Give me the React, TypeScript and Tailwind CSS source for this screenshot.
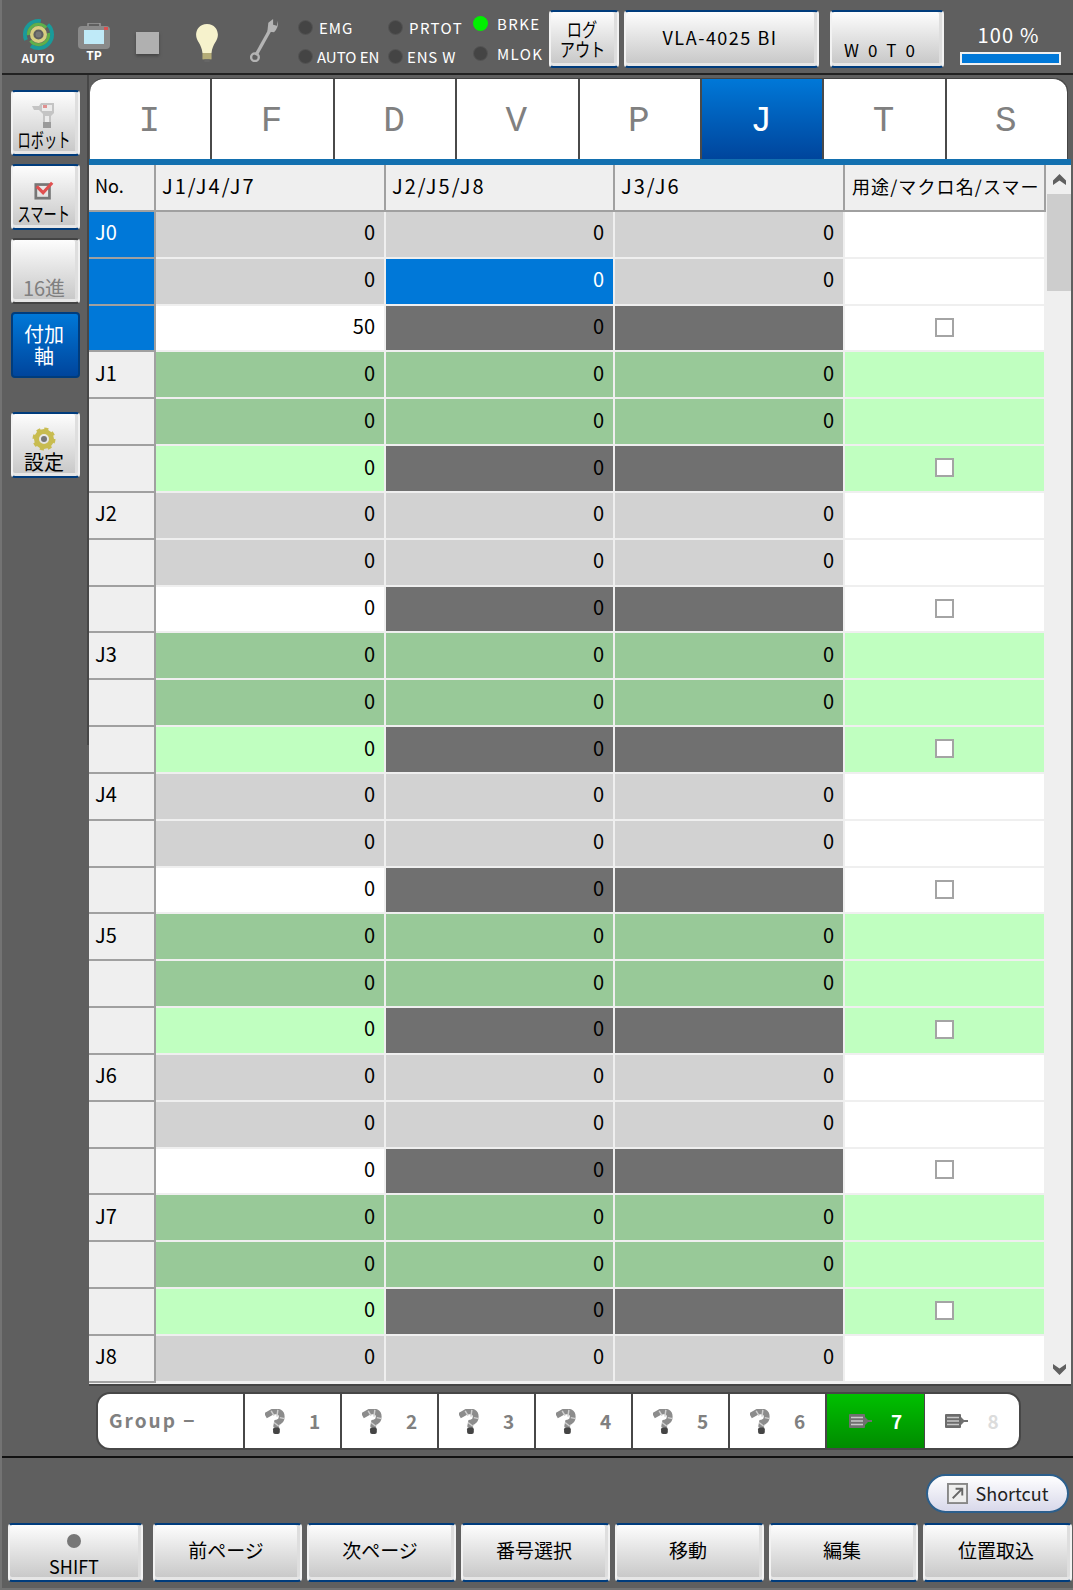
import React from "react";

const font = "font-['Noto_Sans_CJK_JP','Liberation_Sans',sans-serif]";

const tabs = ["I", "F", "D", "V", "P", "J", "T", "S"];
const sideGap = "border-r-2 border-b-2 border-[#efefef]";
const columns = "grid-cols-[67px_230px_229px_230px_201px]";

function Robot({ className = "" }: { className?: string }) {
	return (
		<svg viewBox="0 0 20 26" className={className}>
			<path d="M0 7 L7 3 Q17 1 17 8 Q17 13 12 14 L11 19" fill="none" stroke="#8c8c8c" strokeWidth="6" />
			<path d="M6 2 L9 7 M13 1 L12 8 M15 9 L20 10 M9 14 L14 18" stroke="#cfcfcf" strokeWidth="1.5" />
			<rect x="8" y="19" width="7" height="7" rx="2" fill="#444" />
		</svg>
	);
}

function SideRobot() {
	return (
		<svg viewBox="0 0 24 27" className="w-[24px] h-[27px]">
			<path d="M0 4 H7 L9 1 H22 V11 L19 14 V24 L13 26 L11 24 V12 L7 8 H2 Z" fill="#c4c4c4" />
			<path d="M10 3 H20 V9 H10 Z M13 14 H17 V22 H13 Z" fill="#ebebeb" />
			<rect x="11" y="3" width="4" height="3" fill="#e09090" />
			<path d="M11 20 H19 V26 H11 Z" fill="#9a9a9a" />
		</svg>
	);
}

function Motor({ light }: { light?: boolean }) {
	return (
		<svg viewBox="0 0 24 16" className="w-[24px] h-[16px] shrink-0">
			<rect x="0" y="1" width="16" height="14" rx="1" fill={light ? "#6c6c6c" : "#707070"} />
			<path d="M2 4.5 H14 M2 8 H14 M2 11.5 H14" stroke="#c8c8c8" strokeWidth="1.3" />
			<path d="M16 4 L19 7 H23 V9 H19 L16 12 Z" fill="#707070" />
		</svg>
	);
}

function Btn({ className = "", children, disabled }: { className?: string; children: React.ReactNode; disabled?: boolean }) {
	return (
		<div
			className={`flex flex-col items-center justify-center pr-[3px] rounded-[4px] border-x-2 border-y-2 border-x-[#f2f2f2] ${disabled ? "border-y-[#444444] text-[#808080]" : "border-y-[#003c7c] text-black"} bg-linear-to-b from-[#fdfdfd] to-[#c6c6c6] shadow-[inset_0_-3px_0_#e6e6e6,inset_-3px_0_0_#dedede] ${className}`}
		>
			{children}
		</div>
	);
}

function Led({ label, on, className = "" }: { label: string; on?: boolean; className?: string }) {
	return (
		<div className={`flex items-center gap-[4px] ${className}`}>
			<span className={`w-[15px] h-[15px] shrink-0 rounded-full ${on ? "bg-[#00f000]" : "bg-[#444444] border border-[#545454]"}`} />
			<span className="text-[15px] leading-none text-white whitespace-nowrap">{label}</span>
		</div>
	);
}

function Header() {
	return (
		<div className="h-[75px] shrink-0 border-b-2 border-[#222222] flex items-start pl-[14px]">
			<div className="w-[44px] mt-[18px] flex flex-col items-center">
				<svg viewBox="0 0 34 34" className="w-[33px] h-[33px]">
					<circle cx="17" cy="17" r="14" fill="none" stroke="#1a9a9a" strokeWidth="4" strokeDasharray="30 8" />
					<circle cx="17" cy="17" r="10.5" fill="none" stroke="#5fb04a" strokeWidth="3" strokeDasharray="26 6" />
					<circle cx="17" cy="17" r="7" fill="none" stroke="#d8cf80" strokeWidth="3.5" />
					<circle cx="17" cy="17" r="3" fill="#777" />
				</svg>
				<span className="text-[12px] leading-[14px] text-white font-bold">AUTO</span>
			</div>
			<div className="w-[40px] ml-[14px] mt-[23px] flex flex-col items-center">
				<svg viewBox="0 0 32 26" className="w-[32px] h-[26px]">
					<rect x="10" y="0" width="12" height="5" rx="1" fill="none" stroke="#999" strokeWidth="1.5" />
					<rect x="0" y="3" width="32" height="23" rx="4" fill="#8a8a8a" />
					<rect x="6" y="7" width="20" height="14" fill="#bfeaf8" />
					<rect x="26" y="4" width="4" height="3" fill="#d85050" />
				</svg>
				<span className="text-[12px] leading-[12px] text-white font-bold">TP</span>
			</div>
			<div className="w-[23px] h-[22px] ml-[22px] mt-[32px] bg-[#b0b0b0] shadow-[0_2px_3px_#444]" />
			<svg viewBox="0 0 26 44" className="w-[24px] h-[40px] ml-[36px] mt-[23px]">
				<path d="M13 1 C5 1 1 7 1 13 C1 20 7 23 8 33 H18 C19 23 25 20 25 13 C25 7 21 1 13 1 Z" fill="#f6f2cc" />
				<rect x="8" y="33" width="10" height="7" fill="#b4ac78" />
				<rect x="10" y="40" width="6" height="3" fill="#666" />
			</svg>
			<svg viewBox="0 0 30 46" className="w-[29px] h-[44px] ml-[31px] mt-[18px]">
				<path d="M6 39 L21 12" stroke="#b4b4b4" strokeWidth="3.5" />
				<path d="M18 14 L19 5 L24 1 L24 7 L28 8 L29 3 Q30 10 25 15 Z" fill="#b4b4b4" />
				<circle cx="5" cy="41" r="4" fill="none" stroke="#b4b4b4" strokeWidth="2.5" />
			</svg>
			<div className="ml-[19px] mt-[20px] w-[90px] flex flex-col gap-[14px]">
				<Led label="EMG" className="gap-[6px] tracking-[1px]" />
				<Led label="AUTO EN" />
			</div>
			<div className="mt-[20px] w-[85px] flex flex-col gap-[14px]">
				<Led label="PRTOT" className="gap-[6px] tracking-[1.4px]" />
				<Led label="ENS W" className="tracking-[0.8px]" />
			</div>
			<div className="mt-[16px] w-[84px] flex flex-col gap-[15px] tracking-[1.4px]">
				<Led label="BRKE" on className="gap-[9px]" />
				<Led label="MLOK" className="gap-[9px]" />
			</div>
			<Btn className="w-[70px] h-[58px] mt-[10px] -ml-[8px] text-[19px] leading-[20px]">
				<span className="scale-x-[0.8] whitespace-nowrap">ログ</span>
				<span className="scale-x-[0.8] whitespace-nowrap">アウト</span>
			</Btn>
			<Btn className="w-[195px] h-[58px] mt-[10px] ml-[5px] text-[18px] tracking-[1.5px] pb-[3px]">VLA-4025 BI</Btn>
			<Btn className="w-[114px] h-[58px] mt-[10px] ml-[11px] text-[17px] justify-end! pb-[4px] pr-[6px]! tracking-[9px]">W0T0</Btn>
			<div className="ml-[16px] mt-[21px] w-[101px] flex flex-col items-center">
				<span className="text-[20px] leading-[28px] text-white pr-[4px] tracking-[1.2px]">100 %</span>
				<div className="w-full h-[13px] mt-[3px] border-2 border-[#f0f0f0] bg-[#0078d8]" />
			</div>
		</div>
	);
}

function Sidebar() {
	return (
		<div className="w-[87px] h-[670px] shrink-0 border-r-2 border-[#474747] pl-[9px] pr-[7px] pt-[15px] flex flex-col gap-[8px] text-[20px] leading-[22px]">
			<Btn className="h-[66px] justify-end! pb-[3px]">
				<SideRobot />
				<span className="scale-x-[0.66] whitespace-nowrap">ロボット</span>
			</Btn>
			<Btn className="h-[66px] justify-end! pb-[3px]">
				<svg viewBox="0 0 22 22" className="w-[20px] h-[20px] mb-[3px]">
					<rect x="2" y="5" width="15" height="15" fill="none" stroke="#777" strokeWidth="3" />
					<path d="M3 7 L10 14 L20 3" fill="none" stroke="#e05050" strokeWidth="3.5" />
				</svg>
				<span className="scale-x-[0.66] whitespace-nowrap">スマート</span>
			</Btn>
			<Btn className="h-[66px] justify-end! pb-[3px]" disabled>16進</Btn>
			<div className="h-[66px] pr-[3px] rounded-[4px] border-2 border-[#003c7c] bg-linear-to-b from-[#0078d8] to-[#00459c] text-white flex flex-col items-center justify-center">
				<span>付加</span>
				<span>軸</span>
			</div>
			<Btn className="h-[66px] mt-[26px] justify-end! pb-[3px]">
				<svg viewBox="0 0 24 24" className="w-[24px] h-[24px]">
					<circle cx="12" cy="12" r="7.5" fill="none" stroke="#c8bc50" strokeWidth="5" />
					<circle cx="12" cy="12" r="10" fill="none" stroke="#c8bc50" strokeWidth="3" strokeDasharray="4 3.85" />
					<circle cx="12" cy="12" r="3" fill="#777" />
				</svg>
				<span>設定</span>
			</Btn>
		</div>
	);
}

function Cell({ bg, value }: { bg: string; value?: string }) {
	return (
		<div className={`${bg} ${sideGap} flex items-center justify-end pr-[9px] pb-[4px] text-[20px] text-black`}>{value}</div>
	);
}

function Rows() {
	const rows = [];
	// J8 is the last block on screen, only its first line shows
	for (let i = 0; i < 25; i++) {
		const group = Math.floor(i / 3);
		const line = i % 3;
		const green = group % 2 === 1;
		const active = group === 0;
		const shade = green ? "bg-[#98c998]" : "bg-[#d2d2d2]";
		const soft = green ? "bg-[#c0ffc0]" : "bg-white";
		const isLast = line === 2;
		rows.push(
			<React.Fragment key={i}>
				<div className={`border-r-2 border-r-[#a0a0a0] border-b-2 border-b-[#a0a0a0] flex items-center pl-[6px] pb-[4px] text-[20px] ${active ? "bg-[#0078d8] text-white" : "bg-[#efefef] text-black"}`}>
					{line === 0 ? `J${group}` : ""}
				</div>
				<Cell bg={isLast ? soft : shade} value={i === 2 ? "50" : "0"} />
				{i === 1 ? (
					<div className={`bg-[#0078d8] ${sideGap} flex items-center justify-end pr-[9px] pb-[4px] text-[20px] text-white`}>0</div>
				) : (
					<Cell bg={isLast ? "bg-[#707070]" : shade} value="0" />
				)}
				<Cell bg={isLast ? "bg-[#707070]" : shade} value={isLast ? "" : "0"} />
				<div className={`${soft} ${sideGap} flex items-center justify-center pb-[2px]`}>
					{isLast && <div className="w-[19px] h-[19px] bg-white border-2 border-[#a4a4a4]" />}
				</div>
			</React.Fragment>,
		);
	}
	return (
		<div className={`grid ${columns} auto-rows-[46.83px]`}>{rows}</div>
	);
}

function Table() {
	return (
		<div className="flex h-[1219px] bg-[#efefef]">
			<div className="w-[958px] shrink-0 flex flex-col overflow-hidden">
				<div className={`grid ${columns} h-[47px] shrink-0 text-[20px] text-black bg-[#efefef]`}>
					<div className="border-r-2 border-b-2 border-[#a0a0a0] pl-[6px] pb-[4px] flex items-center text-[18px]">No.</div>
					{["J1/J4/J7", "J2/J5/J8", "J3/J6"].map((h) => (
						<div key={h} className="border-r-2 border-b-2 border-[#a0a0a0] pl-[6px] pb-[4px] flex items-center tracking-[2px] whitespace-nowrap">
							{h}
						</div>
					))}
					<div className="border-r-2 border-b-2 border-[#a0a0a0] pl-[7px] pb-[3px] flex items-center text-[18px] tracking-[1.1px] whitespace-nowrap overflow-hidden">
						用途/マクロ名/スマー
					</div>
				</div>
				<div className="flex-1 overflow-hidden">
					<Rows />
				</div>
			</div>
			<div className="flex-1 flex flex-col items-stretch">
				<div className="h-[29px] flex items-center justify-center">
					<svg viewBox="0 0 12 10" className="w-[13px] h-[11px]"><path d="M6 0 L12 6 V10 L6 6 L0 10 V6 Z" fill="#606060" /></svg>
				</div>
				<div className="h-[97px] bg-[#cdcdcd]" />
				<div className="flex-1" />
				<div className="h-[29px] flex items-center justify-center">
					<svg viewBox="0 0 12 10" className="w-[13px] h-[11px]"><path d="M6 10 L12 4 V0 L6 4 L0 0 V4 Z" fill="#606060" /></svg>
				</div>
			</div>
		</div>
	);
}

function Tabs() {
	return (
		<div className="flex h-[81px] w-[977px] rounded-t-[14px] overflow-hidden bg-white border-t border-[#444444] shadow-[1px_0_0_#444]">
			{tabs.map((t, i) => (
				<div
					key={t}
					className={`flex-1 flex items-center justify-center pt-[6px] pr-[2px] font-['Liberation_Mono',monospace] text-[36px] leading-none ${i < 7 ? "border-r-2 border-[#4a4a4a]" : ""} ${t === "J" ? "bg-linear-to-b from-[#0078d8] to-[#00459c] text-white" : "text-[#808080]"}`}
				>
					{t}
				</div>
			))}
		</div>
	);
}

function GroupBar() {
	return (
		<div className="flex h-[58px] w-[925px] ml-[7px] mt-[6px] bg-white rounded-[14px] overflow-hidden border-2 border-[#474747] text-[#808080] font-bold text-[19px]">
			<div className="w-[147px] flex items-center pl-[11px] border-r-2 border-[#474747] tracking-[2px] pb-[2px]">Group −</div>
			{[1, 2, 3, 4, 5, 6].map((n) => (
				<div key={n} className="w-[97px] flex items-center justify-center gap-[24px] border-r-2 border-[#474747]">
					<Robot className="w-[20px] h-[25px]" />
					<span>{n}</span>
				</div>
			))}
			<div className="w-[97px] flex items-center justify-center gap-[18px] bg-linear-to-b from-[#00c000] to-[#008c00] text-white">
				<Motor />
				<span>7</span>
			</div>
			<div className="flex-1 flex items-center justify-center gap-[18px] border-l border-[#474747] text-[#dcdcdc]">
				<Motor light />
				<span>8</span>
			</div>
		</div>
	);
}

export default function App() {
	const bottom = ["前ページ", "次ページ", "番号選択", "移動", "編集", "位置取込"];
	return (
		<div className={`w-[1073px] h-[1590px] bg-[#5f5f5f] border-l-2 border-b-2 border-[#737373] flex flex-col overflow-hidden ${font}`}>
			<Header />
			<div className="flex h-[1375px] shrink-0">
				<Sidebar />
				<div className="flex-1 min-w-0">
					<div className="pl-[1px] pt-[3px]">
						<Tabs />
					</div>
					<div className="h-[6px] w-[982px] bg-[#1370b0]" />
					<div className="w-[982px]">
						<Table />
					</div>
					<div className="h-[2px] w-[982px] bg-[#444444]" />
					<GroupBar />
				</div>
			</div>
			<div className="h-[2px] mt-[6px] bg-[#111111] shrink-0" />
			<div className="flex justify-end pr-[4px] mt-[16px] shrink-0">
				<div className="w-[143px] h-[39px] rounded-full border-2 border-[#2c5f8c] bg-linear-to-b from-white to-[#d8d8ea] flex items-center justify-center gap-[8px] text-[18px] text-[#222222]">
					<svg viewBox="0 0 22 22" className="w-[21px] h-[21px]">
						<rect x="1" y="1" width="20" height="20" fill="#eeeeee" stroke="#888" strokeWidth="2" />
						<path d="M6 16 L15 7 M9 6 H16 V13" fill="none" stroke="#666" strokeWidth="2" />
					</svg>
					Shortcut
				</div>
			</div>
			<div className="flex gap-[5px] pl-[6px] mt-[10px] shrink-0 text-[19px] text-black">
				<Btn className="w-[135px] h-[59px] mr-[5px] text-[18px] leading-[22px] justify-end! pb-[3px]">
					<span className="w-[14px] h-[14px] rounded-full bg-[#777777] mb-[7px]" />
					SHIFT
				</Btn>
				{bottom.map((b) => (
					<Btn key={b} className="w-[149px] h-[59px] pb-[4px]">{b}</Btn>
				))}
			</div>
		</div>
	);
}
